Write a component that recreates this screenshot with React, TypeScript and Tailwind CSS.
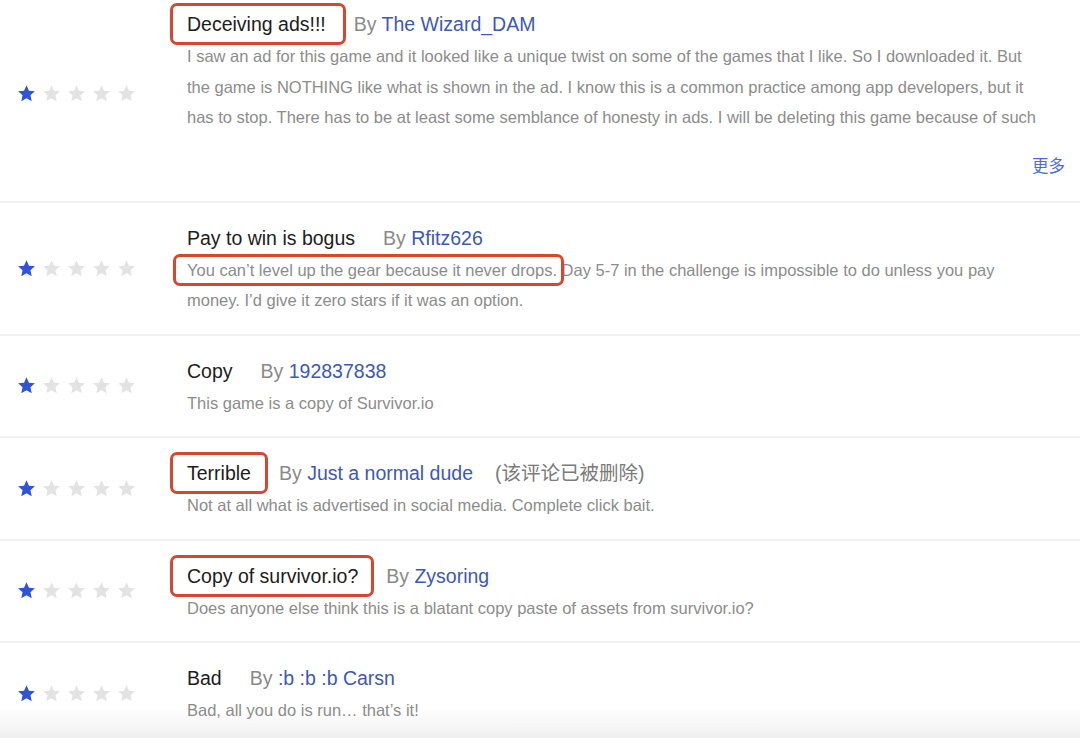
import React from "react";

type Mark = { left: number; right: number };

type Review = {
  title: string;
  author: string;
  titleMark?: Mark;
  note?: string;
  bodyMark?: string;
  lines: string[];
  more?: boolean;
};

const reviews: Review[] = [
  {
    title: "Deceiving ads!!!",
    author: "The Wizard_DAM",
    titleMark: { left: 17, right: 20 },
    lines: [
      "I saw an ad for this game and it looked like a unique twist on some of the games that I like. So I downloaded it. But",
      "the game is NOTHING like what is shown in the ad. I know this is a common practice among app developers, but it",
      "has to stop. There has to be at least some semblance of honesty in ads. I will be deleting this game because of such",
    ],
    more: true,
  },
  {
    title: "Pay to win is bogus",
    author: "Rfitz626",
    bodyMark: "You can’t level up the gear because it never drops.",
    lines: [" Day 5-7 in the challenge is impossible to do unless you pay", "money. I’d give it zero stars if it was an option."],
  },
  {
    title: "Copy",
    author: "192837838",
    lines: ["This game is a copy of Survivor.io"],
  },
  {
    title: "Terrible",
    author: "Just a normal dude",
    titleMark: { left: 17, right: 17 },
    note: "(该评论已被删除)",
    lines: ["Not at all what is advertised in social media. Complete click bait."],
  },
  {
    title: "Copy of survivor.io?",
    author: "Zysoring",
    titleMark: { left: 17, right: 16 },
    lines: ["Does anyone else think this is a blatant copy paste of assets from survivor.io?"],
  },
  {
    title: "Bad",
    author: ":b :b :b Carsn",
    lines: ["Bad, all you do is run… that’s it!"],
  },
];

const Star = ({ on }: { on: boolean }) => (
  <svg width="19" height="19" viewBox="0 0 24 24" className={on ? "fill-[#2f54d6]" : "fill-[#e3e3e3]"}>
    <polygon points="12,1.5 15.1,8.4 22.6,9.2 17,14.3 18.6,21.7 12,17.9 5.4,21.7 7,14.3 1.4,9.2 8.9,8.4" />
  </svg>
);

// red annotation box drawn over a piece of text
const Outline = ({ left, right, top, bottom }: { left: number; right: number; top: number; bottom: number }) => (
  <span
    className="absolute rounded-[7px] border-[3px] border-[#d5472f] pointer-events-none"
    style={{ left: -left, right: -right, top: -top, bottom: -bottom }}
  />
);

const ReviewRow = ({ r, first }: { r: Review; first: boolean }) => (
  <div className="flex border-b-2 border-[#f1f1f1]">
    <div className="w-[187px] shrink-0 flex items-center gap-[6px] pl-[17px]">
      {[0, 1, 2, 3, 4].map((i) => (
        <Star key={i} on={i === 0} />
      ))}
    </div>
    <div className={`flex-1 pr-[15px] ${first ? "pt-[22px] pb-[20px]" : "pt-[20px] pb-[18px]"}`}>
      <div className="flex items-center h-[30px] text-[19.5px] leading-[30px] whitespace-nowrap">
        <span className="relative text-[#1c1c1c]">
          {r.title}
          {r.titleMark && <Outline left={r.titleMark.left} right={r.titleMark.right} top={6} bottom={6} />}
        </span>
        <span className="ml-[28px] text-[#8a8a8a]">
          By <span className="text-[#3c58b8]">{r.author}</span>
        </span>
        {r.note && <span className="ml-[22px] text-[#7a7a7a]">{r.note}</span>}
      </div>
      <div className="mt-[2px] text-[16.5px] leading-[30.5px] text-[#8c8c8c]">
        {r.lines.map((line, i) => (
          <div key={i} className="whitespace-pre">
            {i === 0 && r.bodyMark && (
              <span className="relative">
                {r.bodyMark}
                <Outline left={14} right={7} top={7} bottom={7} />
              </span>
            )}
            {line}
          </div>
        ))}
      </div>
      {r.more && (
        <div className="mt-[18px] flex justify-end text-[16.5px] leading-[30px] text-[#4a6dd2]">更多</div>
      )}
    </div>
  </div>
);

export default function App() {
  return (
    <div
      className="h-[738px] w-[1080px] overflow-hidden bg-[linear-gradient(to_bottom,#ffffff_0px,#ffffff_708px,#efefef_738px)]"
      style={{ fontFamily: '"Liberation Sans", Arial, "Noto Sans CJK SC", sans-serif' }}
    >
      <div className="-mt-[13px]">
        {reviews.map((r, i) => (
          <ReviewRow key={r.title} r={r} first={i === 0} />
        ))}
      </div>
    </div>
  );
}
